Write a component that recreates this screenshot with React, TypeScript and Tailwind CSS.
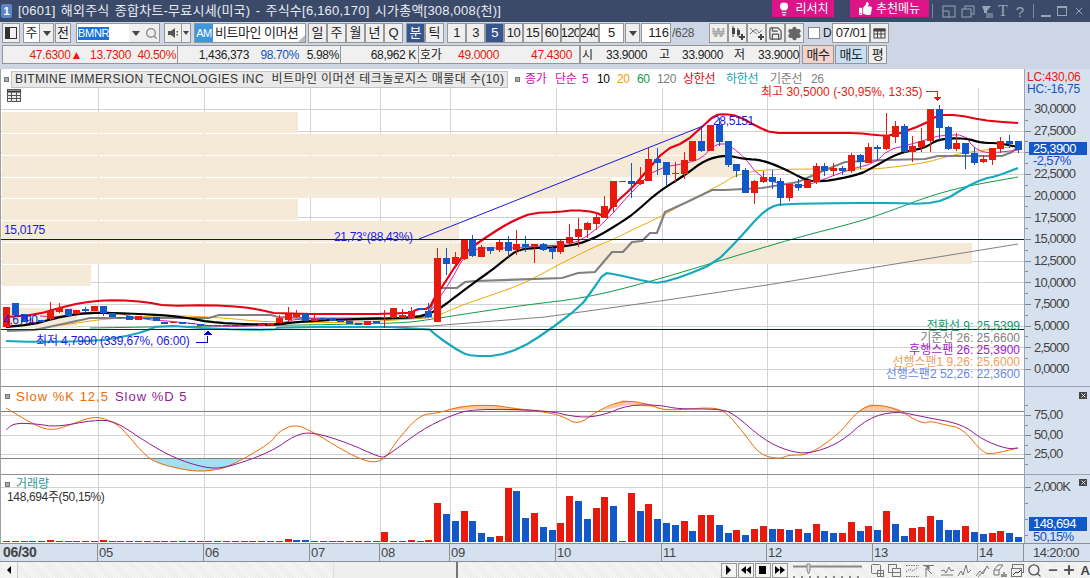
import { type ReactNode } from "react";
import { Lightbulb, Search, Minus, Plus, Settings, Save, X } from "lucide-react";
import { FaThumbsUp } from "react-icons/fa";

const RED = "#e81a0d";
const BLUE = "#1358c8";
const stepX = 8.8;

// i, up(1)/down(0), body top, body bottom, wick top, wick bottom
const candles: number[][] = [
  [0, 1, 307, 327, 307, 327], [1, 0, 303, 315, 303, 315], [2, 0, 314, 322, 314, 322], [3, 1, 322, 323, 320, 323],
  [4, 0, 320, 322, 320, 322], [5, 1, 311, 319, 302, 320], [6, 1, 308, 312, 303, 313], [7, 0, 309, 316, 309, 316],
  [8, 1, 310, 314, 310, 314], [9, 0, 309, 311, 307, 312], [10, 1, 306, 311, 306, 311], [11, 0, 306, 313, 306, 316],
  [12, 0, 313, 317, 313, 317], [13, 1, 317, 318, 317, 318], [14, 0, 316, 320, 316, 320], [15, 1, 316, 320, 316, 320],
  [16, 0, 318, 319, 318, 319], [17, 0, 317, 321, 317, 321], [18, 0, 322, 324, 322, 324], [19, 1, 322, 323, 322, 323],
  [20, 0, 322, 324, 322, 324], [21, 0, 323, 324, 323, 324], [22, 0, 324, 326, 324, 326], [23, 1, 325, 326, 325, 326],
  [24, 1, 325, 326, 325, 326], [25, 1, 325, 326, 325, 326], [26, 0, 325, 326, 325, 326], [27, 1, 325, 326, 325, 326],
  [28, 1, 325, 326, 325, 326], [29, 1, 324, 326, 324, 326], [30, 1, 323, 325, 323, 325], [31, 1, 318, 323, 315, 323],
  [32, 1, 314, 320, 307, 322], [33, 1, 314, 317, 310, 318], [34, 0, 314, 321, 314, 321], [35, 1, 319, 321, 314, 321],
  [36, 0, 318, 320, 318, 320], [37, 0, 318, 321, 318, 321], [38, 0, 320, 322, 320, 322], [39, 0, 321, 324, 321, 324],
  [40, 0, 323, 325, 323, 325], [41, 1, 321, 325, 321, 325], [42, 0, 321, 323, 321, 323], [43, 1, 317, 318, 310, 328],
  [44, 1, 308, 318, 308, 318], [45, 1, 315, 318, 309, 318], [46, 1, 311, 318, 307, 319], [47, 0, 308, 310, 308, 310],
  [48, 0, 311, 317, 303, 318], [49, 1, 258, 322, 248, 322], [50, 0, 258, 264, 248, 275], [51, 1, 257, 264, 252, 268],
  [52, 1, 240, 259, 240, 260], [53, 0, 240, 256, 235, 257], [54, 1, 247, 257, 245, 257], [55, 0, 247, 251, 247, 254],
  [56, 1, 242, 250, 240, 252], [57, 0, 242, 251, 236, 257], [58, 1, 244, 250, 230, 255], [59, 0, 244, 247, 236, 252],
  [60, 1, 244, 246, 244, 263], [61, 0, 244, 250, 243, 251], [62, 0, 248, 252, 245, 259], [63, 1, 241, 252, 240, 254],
  [64, 1, 237, 243, 224, 244], [65, 1, 229, 237, 218, 247], [66, 1, 223, 230, 222, 238], [67, 1, 217, 224, 212, 230],
  [68, 1, 206, 218, 196, 218], [69, 1, 181, 207, 181, 212], [70, 1, 181, 182, 181, 182], [71, 0, 181, 184, 163, 198],
  [72, 1, 180, 184, 167, 185], [73, 1, 159, 181, 148, 181], [74, 0, 159, 163, 148, 175], [75, 0, 162, 175, 162, 185],
  [76, 1, 173, 174, 162, 183], [77, 1, 160, 174, 152, 179], [78, 1, 141, 161, 141, 161], [79, 0, 141, 151, 126, 152],
  [80, 1, 125, 151, 125, 151], [81, 0, 125, 142, 118, 146], [82, 0, 141, 165, 141, 167], [83, 0, 164, 171, 164, 177],
  [84, 0, 170, 193, 168, 193], [85, 1, 181, 193, 180, 204], [86, 1, 177, 182, 171, 183], [87, 0, 177, 182, 170, 189],
  [88, 0, 181, 198, 178, 206], [89, 1, 184, 198, 184, 201], [90, 0, 184, 188, 179, 191], [91, 1, 180, 188, 180, 188],
  [92, 1, 166, 182, 163, 184], [93, 0, 166, 171, 163, 176], [94, 1, 168, 171, 163, 176], [95, 0, 168, 171, 166, 175],
  [96, 1, 155, 171, 153, 173], [97, 0, 155, 162, 154, 169], [98, 1, 147, 163, 143, 163], [99, 0, 147, 149, 145, 160],
  [100, 1, 135, 149, 113, 150], [101, 1, 126, 137, 121, 143], [102, 0, 126, 152, 124, 153], [103, 1, 146, 152, 136, 162],
  [104, 1, 141, 147, 128, 152], [105, 1, 109, 141, 109, 152], [106, 0, 109, 128, 105, 140], [107, 0, 127, 149, 126, 150],
  [108, 1, 143, 149, 133, 151], [109, 0, 143, 154, 143, 169], [110, 0, 153, 163, 147, 165], [111, 1, 159, 162, 155, 163],
  [112, 1, 148, 160, 148, 165], [113, 1, 141, 149, 137, 153], [114, 0, 141, 144, 135, 148], [115, 0, 141, 150, 141, 153],
];

const upper = [[6,317],[35,315],[70,305],[94,301],[118,300],[146,302],[167,306],[209,305],[243,307],[261,310],[278,314],[410,314],[417,309],[429,309],[435,297],[442,287],[458,262],[468,250],[482,240],[502,227],[515,220],[532,213],[558,212],[575,210],[595,212],[605,217],[613,205],[632,188],[645,173],[665,150],[685,142],[702,127],[715,115],[725,114],[738,116],[758,127],[772,133],[798,133],[825,133],[858,133],[875,135],[892,136],[925,124],[938,115],[958,115],[982,120],[1002,122],[1018,123]];
const ma10 = [[6,327],[35,324],[55,318],[83,313],[115,313],[163,315],[188,318],[215,323],[275,325],[295,322],[348,319],[414,318],[431,313],[442,307],[455,297],[475,282],[492,270],[508,257],[518,250],[532,248],[565,247],[592,240],[625,220],[638,210],[658,192],[685,175],[705,160],[725,155],[745,159],[762,160],[785,169],[805,180],[822,182],[858,175],[872,168],[898,153],[925,148],[938,139],[965,138],[982,143],[998,143],[1018,147]];
const ma5 = [[40,316],[60,317],[85,312],[115,312],[140,319],[180,322],[220,327],[275,325],[300,318],[380,318],[420,317],[430,312],[438,300],[450,282],[465,255],[478,248],[495,248],[515,248],[538,246],[565,245],[582,240],[605,222],[638,185],[658,168],[688,163],[702,158],[712,147],[722,143],[732,147],[745,158],[758,175],[775,183],[802,187],[822,180],[848,170],[875,163],[888,150],[908,145],[925,140],[942,135],[965,135],[973,147],[985,153],[1002,152],[1018,150]];
const ma20 = [[35,329],[76,323],[104,319],[167,315],[226,318],[264,322],[348,323],[427,318],[435,317],[462,305],[492,295],[525,283],[558,265],[592,248],[612,240],[632,230],[658,218],[685,203],[712,189],[725,182],[734,176],[750,172],[762,170],[798,169],[858,169],[878,169],[925,163],[945,157],[968,152],[1002,148],[1018,146]];
const kijun = [[7,331],[35,330],[90,318],[209,318],[219,315],[271,315],[278,317],[348,320],[427,317],[434,300],[438,288],[457,288],[465,282],[475,281],[562,278],[578,273],[595,272],[612,252],[623,252],[632,242],[642,241],[650,233],[657,233],[665,212],[685,203],[712,190],[725,190],[762,188],[798,182],[825,170],[845,162],[885,160],[925,159],[938,156],[1002,156],[1012,152],[1018,147]];
const ma60 = [[90,328],[209,326],[309,325],[403,323],[427,320],[458,315],[525,305],[585,298],[649,282],[719,261],[795,238],[858,222],[893,210],[927,197],[962,187],[1018,177]];
const ma120 = [[372,327],[431,326],[545,317],[667,300],[767,285],[858,270],[938,257],[1018,244]];
const lower = [[6,341],[35,342],[97,341],[122,337],[143,332],[160,325],[215,329],[275,330],[278,327],[427,327],[438,337],[462,353],[473,356],[497,356],[521,348],[545,333],[580,307],[594,288],[604,273],[614,274],[649,282],[660,283],[684,276],[715,263],[736,242],[760,215],[771,207],[781,204],[851,203],[893,203],[924,204],[945,200],[966,187],[983,179],[997,176],[1018,168]];

const slowK = [[6,408],[31,423],[50,431],[70,425],[94,416],[111,421],[122,428],[146,457],[163,465],[191,471],[209,471],[229,467],[271,443],[278,432],[295,424],[313,432],[341,449],[358,458],[374,463],[386,458],[395,443],[419,415],[438,413],[462,406],[494,405],[511,408],[545,412],[562,416],[578,425],[597,411],[623,400],[649,404],[665,411],[712,407],[726,412],[743,432],[760,455],[780,459],[788,455],[809,455],[840,433],[854,415],[870,404],[896,408],[922,424],[931,421],[945,425],[962,428],[983,453],[993,454],[1018,448]];
const slowD = [[6,430],[14,423],[38,424],[56,427],[94,420],[115,421],[146,442],[174,458],[205,468],[226,468],[271,452],[295,435],[313,432],[348,443],[379,457],[386,457],[421,430],[452,415],[473,409],[545,410],[580,418],[604,415],[628,405],[660,405],[677,409],[719,409],[733,413],[764,440],[788,451],[809,454],[840,443],[868,418],[896,411],[924,417],[962,424],[983,440],[1007,449],[1018,448]];

// volume bar tops, red > 0, blue < 0, from index 49 on
const volTail = [369,-402,-423,393,-423,-459,-471,468,324,-333,-414,399,-441,-450,429,348,-363,-417,384,351,-378,-483,339,-393,372,-417,-429,-435,423,-453,405,405,-435,-459,450,-465,447,438,-447,447,-450,447,-459,432,-453,-459,459,426,-453,438,-450,393,-432,-468,444,441,408,-420,-450,-450,438,-456,-462,459,453,-459,-471];
const volHead: Record<number, number> = { 5: 480, 11: 480, 32: 477, 33: -480, 34: -480, 43: 456, 46: 480, 48: 480 };

const pts = (a: number[][]) => a.map((p) => p.join(",")).join(" ");

// corner cutting, keeps the line rounded like the averaged lines of the chart
const soft = (a: number[][], n = 2): number[][] => {
  let out = a;
  for (let k = 0; k < n; k++) {
    const next: number[][] = [out[0]];
    for (let i = 0; i < out.length - 1; i++) {
      const [x1, y1] = out[i];
      const [x2, y2] = out[i + 1];
      next.push([x1 * 0.75 + x2 * 0.25, y1 * 0.75 + y2 * 0.25], [x1 * 0.25 + x2 * 0.75, y1 * 0.25 + y2 * 0.75]);
    }
    next.push(out[out.length - 1]);
    out = next;
  }
  return out;
};

const gridX = [98.5, 204.5, 310.5, 380.5, 450.5, 556.5, 662.5, 767.5, 873.5, 978.5];

const Btn = ({ className = "", children }: { className?: string; children?: ReactNode }) => (
  <div className={`h-[20px] shrink-0 flex items-center justify-center border border-[#969696] bg-[#efefef] text-[13px] text-[#222] ${className}`}>
    {children}
  </div>
);

const Caret = () => <div className="w-0 h-0 border-x-[4px] border-x-transparent border-t-[5px] border-t-[#444]" />;

const VLines = ({ y1, y2 }: { y1: number; y2: number }) => (
  <>
    {gridX.map((x) => (
      <line key={x} x1={x} x2={x} y1={y1} y2={y2} stroke="#d2d2d2" />
    ))}
  </>
);

const Ticks = ({ h, major, minor }: { h: number; major: number[]; minor: number[] }) => (
  <svg className="absolute left-0 top-0" width={8} height={h}>
    {major.map((y) => <line key={y} x1={0} x2={6} y1={y} y2={y} stroke="#8a8a8a" />)}
    {minor.map((y) => <line key={y} x1={0} x2={3} y1={y} y2={y} stroke="#8a8a8a" />)}
  </svg>
);

const CloseBox = ({ className = "" }: { className?: string }) => (
  <div className={`absolute w-[8px] h-[7px] bg-[#444] flex items-center justify-center ${className}`}>
    <X size={7} color="#fff" strokeWidth={3} />
  </div>
);

const MiniIcon = ({ children }: { children: ReactNode }) => (
  <svg width={15} height={15} viewBox="0 0 15 15" fill="none" stroke="#777" className="shrink-0">
    {children}
  </svg>
);

const TitleBar = () => (
  <div className="h-[22px] bg-[#3b4a68] flex items-center text-[#e8ecf4] shrink-0">
    <div className="ml-[1px] w-[11px] h-[14px] rounded-[2px] bg-[#5a86c8] text-white text-[11px] font-bold flex items-center justify-center">1</div>
    <div className="ml-[6px] w-[745px] text-[13px] tracking-[0.22px] [word-spacing:1.5px] whitespace-pre">[0601] 해외주식 종합차트-무료시세(미국) - 주식수[6,160,170] 시가총액[308,008(천)]</div>
    <div className="ml-[9px] w-[62px] h-[17px] -mt-[5px] bg-[#dd1488] text-white text-[12px] flex items-center justify-center gap-[4px] whitespace-nowrap">
      <Lightbulb size={14} fill="#fff" strokeWidth={2} />리서치
    </div>
    <div className="ml-[16px] w-[79px] h-[17px] -mt-[5px] bg-[#dd1488] text-white text-[12px] flex items-center justify-center gap-[4px] whitespace-nowrap">
      <FaThumbsUp size={13} />추천메뉴
    </div>
    <div className="ml-[3px] w-px h-[14px] bg-[#7f8aa0]" />
    <div className="ml-[9px] flex items-center gap-[5px]">
      <svg width={14} height={13} fill="none" stroke="#9aa3b5"><rect x="1" y="1" width="12" height="11" /><path d="M1 6h6v6" /></svg>
      <svg width={14} height={13} fill="none" stroke="#9aa3b5"><rect x="4" y="1" width="9" height="8" /><rect x="1" y="4" width="9" height="8" fill="#3b4a68" /></svg>
      <svg width={13} height={13} fill="#9aa3b5"><path d="M2 1h9L7 6v2H4V6z" /><rect x="6" y="8" width="7" height="5" fill="#6d7a92" /></svg>
      <span className="text-[#9aa3b5] text-[16px] font-['Liberation_Serif',serif] leading-none">T</span>
      <span className="ml-[3px] text-[#9aa3b5] text-[15px] leading-none">?</span>
    </div>
    <div className="ml-[9px] w-px h-[14px] bg-[#7f8aa0]" />
    <div className="ml-[7px] flex items-center gap-[6px]">
      <div className="w-[10px] h-[2px] bg-[#9aa3b5] mt-[9px]" />
      <div className="w-[10px] h-[10px] border border-[#9aa3b5] border-t-2" />
      <X size={12} color="#9aa3b5" />
    </div>
  </div>
);

const ToolRow = () => (
  <div className="h-[20px] mt-[1px] flex items-center pl-[2px] shrink-0">
    <Btn className="w-[18px]">
      <svg width={14} height={14} fill="none" stroke="#333"><rect x="1.5" y="1.5" width="11" height="11" /><rect x="1.5" y="1.5" width="4" height="11" fill="#333" /><path d="M9 5 6 7l3 2" stroke="#fff" /></svg>
    </Btn>
    <Btn className="ml-[3px] w-[17px] !bg-white">주</Btn>
    <Btn className="w-[14px] border-l-0"><Caret /></Btn>
    <Btn className="ml-[1px] w-[16px]">전</Btn>
    <div className="ml-[5px] w-[84px] h-[20px] shrink-0 flex border border-[#969696] bg-white">
      <div className="w-[52px] flex items-center pl-[1px]">
        <span className="bg-[#1a73d8] text-white text-[11px] leading-[13px] tracking-[-0.3px]">BMNR</span>
      </div>
      <div className="w-[14px] bg-[#efefef] flex items-center justify-center"><Caret /></div>
      <div className="flex-1 bg-[#efefef] flex items-center justify-center"><Search size={13} color="#888" strokeWidth={2.5} /></div>
    </div>
    <Btn className="ml-[4px] w-[18px]">
      <svg width={12} height={12} fill="#555"><path d="M1 4h3l4-3v10L4 8H1z" /><rect x="9.5" y="4" width="1.5" height="1.5" /><rect x="9.5" y="7" width="1.5" height="1.5" /></svg>
    </Btn>
    <Btn className="w-[9px] border-l-0"><div className="w-0 h-0 border-x-[3px] border-x-transparent border-t-[4px] border-t-[#444]" /></Btn>
    <div className="ml-[3px] w-[112px] h-[20px] shrink-0 flex items-center border border-[#969696] bg-white relative">
      <div className="w-[18px] h-full bg-[#3d97d8] text-white text-[11px] tracking-[-0.5px] flex items-center justify-center">AM</div>
      <span className="ml-[2px] text-[13px] tracking-[-0.5px] text-[#222] whitespace-nowrap">비트마인 이머션</span>
      <div className="absolute right-0 bottom-0 w-0 h-0 border-l-[7px] border-l-transparent border-b-[7px] border-b-[#bbb]" />
    </div>
    <div className="ml-[2px] flex">
      <Btn className="w-[19px]">일</Btn><Btn className="w-[19px]">주</Btn><Btn className="w-[19px]">월</Btn><Btn className="w-[19px]">년</Btn><Btn className="w-[19px]">Q</Btn>
    </div>
    <div className="ml-[3px] flex">
      <Btn className="w-[19px] !bg-[#36558f] !text-white">분</Btn><Btn className="w-[19px]">틱</Btn>
    </div>
    <div className="ml-[3px] flex tracking-[-0.5px]">
      <Btn className="w-[19px]">1</Btn><Btn className="w-[19px]">3</Btn><Btn className="w-[19px] !bg-[#36558f] !text-white">5</Btn>
      <Btn className="w-[19px]">10</Btn><Btn className="w-[19px]">15</Btn><Btn className="w-[19px]">60</Btn>
      <Btn className="w-[19px] overflow-hidden">120</Btn><Btn className="w-[19px] overflow-hidden">240</Btn>
    </div>
    <Btn className="w-[25px] !bg-white">5</Btn>
    <Btn className="ml-[1px] w-[15px]"><Caret /></Btn>
    <Btn className="ml-[1px] w-[30px] !bg-white !justify-end pr-[1px]">116</Btn>
    <span className="ml-[1px] w-[25px] text-[12px] tracking-[-0.3px] text-[#555]">/628</span>
    <div className="ml-[12px] flex">
      <Btn className="w-[19px]"><span className="text-[#aaa] text-[13px] font-bold">₩</span></Btn>
      <Btn className="w-[19px]">
        <svg width={15} height={15} fill="#444"><rect x="2" y="2" width="3" height="6" /><rect x="7" y="4" width="3" height="5" /><path d="M3 0v11M8 2v9" stroke="#444" /><path d="M11 8h2v2h2v2h-2v2h-2v-2H9v-2h2z" /></svg>
      </Btn>
      <Btn className="w-[19px]">
        <svg width={15} height={15} fill="none" stroke="#777"><path d="M1 2l3 3 3-2 3 4 3-3" /><path d="M1 8l3-3 4 3" /><path d="M11 8h2v2h2v2h-2v2h-2v-2H9v-2h2z" fill="#444" stroke="none" /></svg>
      </Btn>
      <Btn className="w-[19px]"><Save size={15} color="#555" /></Btn>
      <Btn className="w-[19px]"><Settings size={15} color="#666" fill="#666" /></Btn>
    </div>
    <div className="ml-[4px] w-[12px] h-[12px] border border-[#888] bg-white" />
    <span className="ml-[3px] w-[6px] text-[12px] text-[#222]">D</span>
    <Btn className="ml-[3px] w-[38px] !bg-white tracking-[-0.4px]">07/01</Btn>
    <Btn className="w-[19px]">
      <svg width={13} height={12} fill="none" stroke="#444"><rect x="1" y="2" width="11" height="9" /><path d="M1 2h11v2H1z" fill="#444" /><path d="M1 7h11M4.5 4v7M8 4v7" /></svg>
    </Btn>
  </div>
);

const QuoteCell = ({ className = "", children }: { className?: string; children: ReactNode }) => (
  <div className={`h-[19px] shrink-0 flex items-center border border-[#969696] bg-[#f0f0f0] text-[12px] tracking-[-0.35px] text-[#222] whitespace-nowrap ${className}`}>
    {children}
  </div>
);

const QuoteRow = () => (
  <div className="h-[19px] mt-[2px] flex items-center pl-[2px] shrink-0">
    <QuoteCell className="w-[176px] text-[#e8190d]">
      <span className="w-[79px] text-right">47.6300▲</span><span className="w-[49px] text-right">13.7300</span><span className="w-[45px] text-right">40.50%</span>
    </QuoteCell>
    <QuoteCell className="w-[163px] border-l-0">
      <span className="w-[71px] text-right">1,436,373</span><span className="w-[50px] text-right text-[#1450c0]">98.70%</span><span className="w-[40px] text-right">5.98%</span>
    </QuoteCell>
    <QuoteCell className="w-[78px] border-l-0 justify-end pr-[2px]">68,962 K</QuoteCell>
    <QuoteCell className="w-[161px] border-l-0">
      <span className="ml-[1px] w-[24px]">호가</span><span className="w-[55px] text-right text-[#e8190d]">49.0000</span><span className="w-[73px] text-right text-[#e8190d]">47.4300</span>
    </QuoteCell>
    <QuoteCell className="w-[220px]">
      <span className="ml-[1px] w-[12px]">시</span><span className="w-[53px] text-right">33.9000</span><span className="ml-[12px] w-[14px]">고</span><span className="w-[50px] text-right">33.9000</span><span className="ml-[11px] w-[12px]">저</span><span className="w-[53px] text-right">33.9000</span>
    </QuoteCell>
    <QuoteCell className="ml-[2px] w-[32px] !bg-[#f3d3cb] justify-center !text-[13px]">매수</QuoteCell>
    <QuoteCell className="ml-[1px] w-[32px] !bg-[#c8dff2] justify-center !text-[13px]">매도</QuoteCell>
    <QuoteCell className="ml-[1px] w-[19px] justify-center !text-[13px]">평</QuoteCell>
  </div>
);

const PricePlot = () => (
  <svg width={1024} height={317} viewBox="0 69 1024 317" className="block" shapeRendering="crispEdges">
    <rect x="0" y="69" width="1024" height="317" fill="#fff" />
    {Array.from({ length: 13 }, (_, k) => (
      <line key={k} x1="1" x2="1024" y1={Math.round(369 - k * 21.67) + 0.5} y2={Math.round(369 - k * 21.67) + 0.5} stroke="#d2d2d2" />
    ))}
    <VLines y1={88} y2={386} />
    <g fill="#f5e9d7">
      <rect x="2" y="112" width="296" height="20.5" />
      <rect x="2" y="134" width="723" height="20.5" />
      <rect x="2" y="156" width="733" height="20.5" />
      <rect x="2" y="178" width="610" height="20" />
      <rect x="2" y="199" width="296" height="20.5" />
      <rect x="2" y="221" width="457" height="21" />
      <rect x="2" y="243" width="970" height="21" />
      <rect x="2" y="265" width="89" height="21" />
      <rect x="3" y="308" width="74" height="20" />
    </g>
    <g shapeRendering="auto" fill="none">
      <polyline points={pts(ma120)} stroke="#808080" />
      <polyline points={pts(soft(ma60))} stroke="#0f9b47" />
      <polyline points={pts(soft(ma20))} stroke="#f0a800" />
      <polyline points={pts(kijun)} stroke="#808080" strokeWidth="2.2" />
      <polyline points={pts(soft(lower, 1))} stroke="#16a8bc" strokeWidth="2.2" />
      <polyline points={pts(soft(upper, 1))} stroke="#e60012" strokeWidth="2.2" />
      <polyline points={pts(soft(ma5, 1))} stroke="#d820b0" />
      <polyline points={pts(soft(ma10))} stroke="#000" strokeWidth="2.2" />
    </g>
    {candles.map(([i, up, top, bottom, hi, lo]) => {
      const x = Math.round(6 + i * stepX);
      const c = up ? RED : BLUE;
      return (
        <g key={i}>
          <line x1={x + 0.5} x2={x + 0.5} y1={hi} y2={lo} stroke={c} />
          <rect x={x - 3} y={top} width="7" height={bottom - top} fill={c} />
        </g>
      );
    })}
    <line x1="1" x2="1024" y1="239.5" y2="239.5" stroke="#0000d8" />
    <line x1="1" x2="1024" y1="329.5" y2="329.5" stroke="#0000d8" />
    <line x1="419" y1="239" x2="703" y2="126" stroke="#1a1ae0" shapeRendering="auto" />
    <path d="M926 91.5h11.5v6" stroke="#e81a0d" fill="none" />
    <path d="M933.5 97h8l-4 4z" fill="#e81a0d" />
    <path d="M196 342.5h11.5v-7" stroke="#0000d8" fill="none" />
    <path d="M203 335h9l-4.500-4.500z" fill="#0000d8" />
  </svg>
);

const StochPlot = () => (
  <svg width={1024} height={88} viewBox="0 386 1024 88" className="block">
    <g shapeRendering="crispEdges">
      <rect x="0" y="386" width="1024" height="88" fill="#fff" />
      {[415.5, 435.5, 454.5].map((y) => <line key={y} x1="1" x2="1024" y1={y} y2={y} stroke="#d2d2d2" />)}
      <VLines y1={386} y2={474} />
    </g>
    <polygon points="150,458 163,465 191,471 209,471 229,467 242,459" fill="#a5dff2" />
    <polygon points="445,411 462,406 494,405 511,408 545,412 473,409" fill="#f8c8a8" />
    <polygon points="600,411 623,400 649,404 662,408 628,405" fill="#f8c8a8" />
    <polygon points="858,411 870,404 896,408 905,412 896,411" fill="#f8c8a8" />
    <g shapeRendering="crispEdges">
      <line x1="1" x2="1024" y1="411.5" y2="411.5" stroke="#808080" />
      <line x1="1" x2="1024" y1="458.5" y2="458.5" stroke="#808080" />
    </g>
    <polyline points={pts(soft(slowK))} stroke="#f06a00" fill="none" />
    <polyline points={pts(soft(slowD))} stroke="#901c90" fill="none" />
  </svg>
);

const VolumePlot = () => {
  const vols = Array.from({ length: 116 }, (_, i) => {
    if (i >= 49) return volTail[i - 49];
    if (volHead[i]) return volHead[i];
    return i % 6 < 3 ? 484 : -484;
  });
  return (
    <svg width={1024} height={69} viewBox="0 474 1024 69" className="block" shapeRendering="crispEdges">
      <rect x="0" y="474" width="1024" height="69" fill="#fff" />
      <line x1="1" x2="1024" y1="487.5" y2="487.5" stroke="#d2d2d2" />
      <VLines y1={474} y2={543} />
      {vols.map((v, i) => {
        const top = Math.round(380 + Math.abs(v) / 3);
        return <rect key={i} x={Math.round(6 + i * stepX) - 3} y={top} width="7" height={542 - top} fill={v > 0 ? RED : BLUE} />;
      })}
    </svg>
  );
};

const Bullet = () => <div className="w-[5px] h-[5px] bg-[#aaa] border border-[#777] shrink-0" />;

const Legend = () => (
  <div className="absolute left-[4px] top-[1px] flex items-center text-[12px] whitespace-pre">
    <Bullet />
    <div className="ml-[2px] w-[497px] h-[17px] bg-[#e9e9e9] border border-[#c4c4c4] flex items-center pl-[3px] pb-[1px] text-[#333] tracking-[0.42px] overflow-hidden">BITMINE IMMERSION TECNOLOGIES INC  비트마인 이머션 테크놀로지스 매물대 수(10)</div>
    <div className="ml-[7px]"><Bullet /></div>
    <div className="ml-[5px] pb-[1px] flex tracking-[-0.3px]">
      <span className="w-[30px] text-[#d010b0]">종가</span>
      <span className="w-[27px] text-[#d010b0]">단순</span>
      <span className="w-[15px] text-[#d010b0]">5</span>
      <span className="w-[20px] text-black">10</span>
      <span className="w-[20px] text-[#f0a000]">20</span>
      <span className="w-[20px] text-[#0f9b47]">60</span>
      <span className="w-[26px] text-[#808080]">120</span>
      <span className="w-[43px] text-[#e60012]">상한선</span>
      <span className="w-[44px] text-[#16a0b0]">하한선</span>
      <span className="w-[41px] text-[#808080]">기준선</span>
      <span className="text-[#808080]">26</span>
    </div>
  </div>
);

const Note = ({ className, children }: { className: string; children: ReactNode }) => (
  <span className={`absolute whitespace-pre text-[12px] leading-[14px] tracking-[-0.35px] ${className}`}>{children}</span>
);

const AxisLabel = ({ children }: { children: ReactNode }) => (
  <div className="h-[21.67px] flex items-center pl-[9px] text-[13px] tracking-[-0.85px] text-[#444] leading-none">{children}</div>
);

const RightAxis = () => (
  <div className="w-[66px] shrink-0 bg-[#d6e1ef] border-l border-[#9aa4b4] relative text-[#444] overflow-hidden">
    <div className="h-[317px] relative">
      <Ticks
        h={317}
        major={Array.from({ length: 13 }, (_, k) => Math.round(300 - k * 21.67) + 0.5)}
        minor={Array.from({ length: 12 }, (_, k) => Math.round(289 - k * 21.67) + 0.5)}
      />
      <div className="absolute left-[2px] top-[2px] text-[12px] leading-[12px] tracking-[-0.2px] whitespace-nowrap">
        <div className="h-[12px] text-[#e8190d]">LC:430,06</div>
        <div className="h-[12px] text-[#1450c0]">HC:-16,75</div>
      </div>
      <div className="pt-[29px]">
        {["30,0000","27,5000","25,0000","22,5000","20,0000","17,5000","15,0000","12,5000","10,0000","7,5000","5,0000","2,5000","0,0000"].map((t) => (
          <AxisLabel key={t}>{t === "25,0000" ? <span className="invisible">{t}</span> : t}</AxisLabel>
        ))}
      </div>
      <div className="absolute left-[4px] top-[73px] w-[58px] h-[13px] bg-[#1358c8] text-white text-[13px] tracking-[-0.6px] leading-[13px] pl-[4px]">25,3900</div>
      <div className="absolute left-[8px] top-[86px] text-[#1450c0] text-[13px] tracking-[-0.6px] leading-[12px]">-2,57%</div>
    </div>
    <div className="h-[88px] relative border-t border-[#9aa4b4] box-border">
      <Ticks h={88} major={[28.5, 48.5, 67.5]} minor={[18.5, 38.5, 58.5, 77.5]} />
      <CloseBox className="left-[54px] top-[5px]" />
      <div className="pt-[17px]">
        <AxisLabel>75,00</AxisLabel>
        <div className="-mt-[2px]"><AxisLabel>50,00</AxisLabel></div>
        <div className="-mt-[3px]"><AxisLabel>25,00</AxisLabel></div>
      </div>
    </div>
    <div className="h-[69px] relative border-t border-[#9aa4b4] box-border">
      <Ticks h={69} major={[12.5]} minor={[28.5, 44.5, 60.5]} />
      <CloseBox className="left-[54px] top-[4px]" />
      <div className="pt-[1px]"><AxisLabel>2,000K</AxisLabel></div>
      <div className="absolute left-[4px] top-[42px] w-[58px] h-[14px] bg-[#1358c8] text-white text-[13px] tracking-[-0.6px] leading-[14px] pl-[4px]">148,694</div>
      <div className="absolute left-[8px] top-[56px] text-[#1450c0] text-[13px] tracking-[-0.6px] leading-[12px]">50,15%</div>
    </div>
  </div>
);

const dateCells = [
  ["w-[98px]", "06/30"], ["w-[106px]", "05"], ["w-[106px]", "06"], ["w-[70px]", "07"], ["w-[70px]", "08"],
  ["w-[106px]", "09"], ["w-[106px]", "10"], ["w-[105px]", "11"], ["w-[106px]", "12"], ["w-[105px]", "13"], ["w-[46px]", "14"],
];

const DateAxis = () => (
  <div className="h-[19px] flex bg-[#d6e1ef] border-y border-[#8f8f8f] shrink-0 text-[13px] text-[#444] tracking-[-0.3px]">
    {dateCells.map(([w, t], i) => (
      <div key={t} className={`${w} shrink-0 border-r border-[#8f8f8f] flex items-center ${i === 0 ? "pl-[3px] font-bold !text-[14px]" : "pl-[1px]"}`}>{t}</div>
    ))}
    <div className="flex-1 flex items-center pl-[9px] tracking-[-0.6px]">14:20:00</div>
  </div>
);

const PlayBtn = ({ children }: { children: ReactNode }) => (
  <div className="w-[16px] h-[15px] shrink-0 bg-[#f4f4f4] border border-[#999] flex items-center justify-center">{children}</div>
);

const ScrollRow = () => (
  <div className="flex-1 flex items-center bg-[#f1f1f1] bg-[repeating-linear-gradient(45deg,#f6f6f6_0_1px,#ececec_1px_2px)]">
    <div className="ml-[2px] w-[16px] h-full bg-[#f4f4f4] border-r border-[#ccc] flex items-center justify-center">
      <div className="w-0 h-0 border-y-[4px] border-y-transparent border-r-[4px] border-r-black" />
    </div>
    <div className="ml-[315px] w-[128px] h-full bg-[#efefef] border-l border-[#ddd] border-r-2 border-r-[#777]" />
    <div className="ml-[263px] flex items-center gap-[1px]">
      <PlayBtn><div className="w-0 h-0 border-y-[5px] border-y-transparent border-l-[5px] border-l-black" /></PlayBtn>
      <PlayBtn>
        <div className="flex"><div className="w-0 h-0 border-y-[4px] border-y-transparent border-r-[5px] border-r-black" /><div className="w-0 h-0 border-y-[4px] border-y-transparent border-r-[5px] border-r-black" /></div>
      </PlayBtn>
      <PlayBtn><div className="w-[7px] h-[8px] bg-black" /></PlayBtn>
      <PlayBtn>
        <div className="flex"><div className="w-0 h-0 border-y-[4px] border-y-transparent border-l-[5px] border-l-black" /><div className="w-0 h-0 border-y-[4px] border-y-transparent border-l-[5px] border-l-black" /></div>
      </PlayBtn>
    </div>
    <svg width={72} height={15} className="ml-[4px] shrink-0" fill="none">
      <path d="M1 3.500h69" stroke="#888" strokeWidth="2" />
      <path d="M15 1h3v6l-1.500 4-1.500-4z" fill="#ddd" stroke="#888" />
      <path d="M2 13v2M10 13v2M18 13v2M26 13v2M34 13v2M42 13v2M50 13v2M58 13v2M66 13v2" stroke="#222" />
    </svg>
    <div className="ml-[6px] flex items-center gap-[2.500px]">
      <MiniIcon><rect x="1.500" y="1.500" width="9" height="9" rx="1" /><rect x="7.500" y="7.500" width="6" height="6" fill="#f1f1f1" /><path d="M10.500 7.500v6M7.500 10.500h6" /></MiniIcon>
      <MiniIcon><rect x="1.500" y="1.500" width="8" height="8" /><rect x="5.500" y="5.500" width="8" height="8" fill="#f1f1f1" /><path d="M5.500 9.500h8" /></MiniIcon>
      <MiniIcon><path d="M1 2.500h13M1 13.500h13M1 9l4-3 3 2 5-4" strokeDasharray="1.500 1" /></MiniIcon>
      <MiniIcon><path d="M1 2.500h11M4 14V5M4 5l6 6" /><path d="M3 2.500h4v4z" fill="#777" /></MiniIcon>
      <MiniIcon><path d="M1 12h12M1 8l3-1 2 3 3-6 2 4 3-1" /></MiniIcon>
      <MiniIcon><path d="M1 13l3-5 2 4 3-10 2 8 3-3" /></MiniIcon>
      <MiniIcon><path d="M1 13l4-5 3 3 4-8 2 3M3 14l8-9" /></MiniIcon>
      <MiniIcon><path d="M2 7l4-5h5l-4 5H2v5h5V7" /><path d="M10 14v-3M12 14v-5M14 14v-3" stroke="#333" /></MiniIcon>
      <MiniIcon><rect x="2.500" y="1.500" width="11" height="8" /><rect x="1.500" y="5.500" width="10" height="8" fill="#f1f1f1" /><path d="M3 12l3-3 2 1 3-3" stroke="#333" /></MiniIcon>
      <Search size={15} color="#555" strokeWidth={2.2} />
      <Minus size={12} color="#555" strokeWidth={3.5} className="ml-[2px]" />
      <Plus size={14} color="#555" strokeWidth={3.5} className="ml-[1px]" />
      <span className="ml-[2px] text-[13px] font-bold text-[#444] leading-none">A</span>
    </div>
  </div>
);

const PanelRule = () => <div className="absolute left-0 top-0 right-0 h-px bg-[#8f8f8f]" />;

export default function App() {
  return (
    <div className="w-[1090px] h-[578px] overflow-hidden flex flex-col bg-white font-['Liberation_Sans','Noto_Sans_CJK_KR',sans-serif]">
      <TitleBar />
      <div className="h-[47px] bg-[#ced6e6] shrink-0">
        <ToolRow />
        <QuoteRow />
      </div>
      <div className="flex shrink-0">
        <div className="w-[1024px] shrink-0 relative border-l border-[#a0a0a0] box-border overflow-hidden">
          <div className="relative -ml-px">
            <PricePlot />
            <Legend />
            <svg className="absolute left-[7px] top-[20px]" width={14} height={13} fill="none" stroke="#555">
              <rect x="0.5" y="0.5" width="13" height="12" fill="#eee" />
              <path d="M0.5 2.500h13" stroke="#333" strokeWidth="2" />
              <path d="M0.5 6.500h13M0.5 9.500h13M4.500 3v9M9.500 3v9" />
            </svg>
            <Note className="left-[761px] top-[16px] text-[#e8190d] !tracking-[0px]">최고 30,5000 (-30,95%, 13:35)</Note>
            <Note className="left-[713px] top-[45px] text-[#1a1ae0]">28,5151</Note>
            <Note className="left-[334px] top-[161px] text-[#1a1ae0]">21,73°(88,43%)</Note>
            <Note className="left-[4px] top-[154px] text-[#1a1ae0]">15,0175</Note>
            <Note className="left-[3px] top-[244px] text-[#1a1ae0]">4,6790</Note>
            <Note className="left-[36px] top-[265px] text-[#1a1ae0] !tracking-[-0.15px]">최저 4,7900 (339,67%, 06:00)</Note>
            <div className="absolute right-[4px] top-[251px] flex flex-col items-end text-[12px] leading-[12px] tracking-[0px] whitespace-pre">
              <span className="text-[#0a9a70]">전환선 9: 25,5399</span>
              <span className="text-[#808080]">기준선 26: 25,6600</span>
              <span className="text-[#a020c8]">후행스팬 26: 25,3900</span>
              <span className="text-[#f0a060]">선행스팬1 9,26: 25,6000</span>
              <span className="text-[#6a88e8]">선행스팬2 52,26: 22,3600</span>
            </div>
          </div>
          <div className="relative -ml-px">
            <StochPlot />
            <PanelRule />
            <div className="absolute left-[5px] top-[1px] flex items-center text-[13px] tracking-[1px] whitespace-pre">
              <Bullet />
              <span className="ml-[6px] text-[#f06a00]">Slow %K 12,5</span>
              <span className="ml-[6px] text-[#901c90]">Slow %D 5</span>
            </div>
          </div>
          <div className="relative -ml-px">
            <VolumePlot />
            <PanelRule />
            <div className="absolute left-[5px] top-[3px] flex items-center text-[12px] leading-[14px] whitespace-pre">
              <Bullet />
              <span className="ml-[6px] text-[#2a9a9a]">거래량</span>
            </div>
            <Note className="left-[7px] top-[16px] text-[#333]">148,694주(50,15%)</Note>
          </div>
        </div>
        <RightAxis />
      </div>
      <DateAxis />
      <ScrollRow />
    </div>
  );
}
